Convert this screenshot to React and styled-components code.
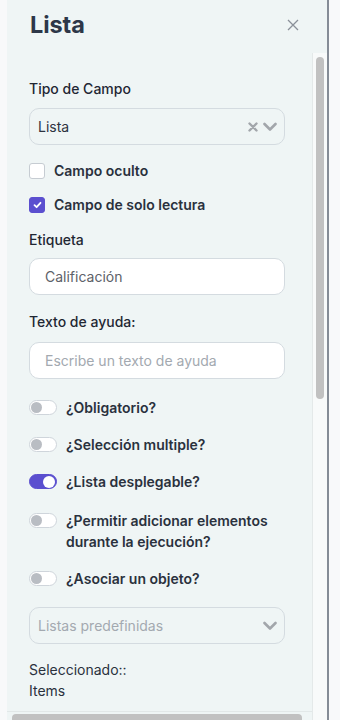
import React from "react";
import styled, { createGlobalStyle } from "styled-components";

const Global = createGlobalStyle`
  html, body { margin: 0; padding: 0; }
  body {
    background: #f8f9fa;
    font-family: Inter, "Noto Sans", sans-serif;
    -webkit-font-smoothing: antialiased;
  }
  * { box-sizing: border-box; }
`;

const Page = styled.div`
  width: 340px;
  height: 720px;
  padding-left: 7px;
  overflow: hidden;
`;

const Panel = styled.div`
  width: 322px;
  height: 720px;
  background: #eff5f5;
  border-right: 2px solid #858c96;
  display: flex;
  flex-direction: column;
  overflow: hidden;
`;

const Header = styled.div`
  height: 53px;
  flex: none;
  display: flex;
  align-items: center;
  justify-content: space-between;
  padding: 0 28px 4px 23px;
`;

const Title = styled.h1`
  margin: 0;
  font-size: 23.5px;
  font-weight: 700;
  color: #2d3748;
  letter-spacing: -0.1px;
`;

const CloseBtn = styled.button`
  border: none;
  background: none;
  padding: 0;
  width: 12px;
  height: 12px;
  display: flex;
  color: #8a9099;
`;

const Body = styled.div`
  flex: none;
  height: 667px;
  display: flex;
`;

const Scroller = styled.div`
  width: 305px;
  display: flex;
  flex-direction: column;
`;

const Content = styled.div`
  flex: none;
  height: 659px;
  padding: 26px 27px 0 22px;
  border-bottom: 1px solid #e2e8e8;
  display: flex;
  flex-direction: column;
`;

const HBar = styled.div`
  flex: none;
  margin: 2px 10px 0 5px;
  height: 10px;
  border-radius: 4px 4px 0 0;
  background: #c1c1c1;
`;

const VTrack = styled.div`
  width: 15px;
  background: #f8fafa;
  border-left: 1px solid #e4e9e9;
  padding: 4px 2px 0 3px;
`;

const VThumb = styled.div`
  width: 8px;
  height: 342px;
  border-radius: 4px;
  background: #c1c1c1;
`;

const Label = styled.div`
  font-size: 14px;
  line-height: 20px;
  font-weight: 500;
  color: #1f2733;
  margin-top: ${(p) => p.$mt || 0}px;
`;

const Box = styled.div`
  margin-top: ${(p) => p.$mt || 0}px;
  height: 37px;
  width: 256px;
  border: 1px solid #d4dbe0;
  border-radius: 10px;
  background: ${(p) => (p.$white ? "#ffffff" : "#eff5f5")};
  display: flex;
  align-items: center;
  padding: 0 ${(p) => (p.$white ? 15 : 8)}px;
  padding-right: 7px;
  font-size: 14px;
  color: ${(p) => (p.$muted ? "#a3a9b0" : p.$white ? "#5d6168" : "#2d3340")};
`;

const BoxText = styled.span`
  flex: 1;
`;

const Icons = styled.span`
  display: flex;
  align-items: center;
  gap: 5px;
  color: #a2a6ab;
`;

const CheckRow = styled.label`
  margin-top: ${(p) => p.$mt || 0}px;
  display: flex;
  align-items: center;
  gap: 9px;
  font-size: 14px;
  line-height: 20px;
  font-weight: 600;
  color: #2a313d;
`;

const CheckBox = styled.span`
  width: 16px;
  height: 16px;
  border-radius: 3px;
  border: 1px solid ${(p) => (p.$on ? "#5b4fcf" : "#c6ccd2")};
  background: ${(p) => (p.$on ? "#5b4fcf" : "#ffffff")};
  display: flex;
  align-items: center;
  justify-content: center;
  flex: none;
`;

const ToggleRow = styled.label`
  margin-top: ${(p) => p.$mt || 0}px;
  display: flex;
  align-items: flex-start;
  gap: 9px;
  font-size: 14px;
  line-height: 21px;
  font-weight: 600;
  color: #2a313d;
`;

const Track = styled.span`
  flex: none;
  margin-top: 3px;
  width: 28px;
  height: 15px;
  border-radius: 8px;
  border: 1px solid ${(p) => (p.$on ? "#5b4fcf" : "#cfd5db")};
  background: ${(p) => (p.$on ? "#5b4fcf" : "#ffffff")};
  display: flex;
  align-items: center;
  justify-content: ${(p) => (p.$on ? "flex-end" : "flex-start")};
  padding: 0 1px;
`;

const Knob = styled.span`
  width: ${(p) => (p.$on ? 12 : 11)}px;
  height: ${(p) => (p.$on ? 12 : 11)}px;
  border-radius: 50%;
  background: ${(p) => (p.$on ? "#ffffff" : "#b9bdc3")};
`;

const Plain = styled.div`
  margin-top: ${(p) => p.$mt || 0}px;
  font-size: 14px;
  line-height: 21px;
  color: #2a313d;
`;

const Chevron = () => (
  <svg width="14" height="10" viewBox="0 0 14 10">
    <path d="M1.5 2 L7 7.5 L12.5 2" fill="none" stroke="currentColor" strokeWidth="2.6" strokeLinecap="round" strokeLinejoin="round" />
  </svg>
);

const Clear = () => (
  <svg width="10" height="10" viewBox="0 0 10 10">
    <path d="M1.5 1.5 L8.5 8.5 M8.5 1.5 L1.5 8.5" stroke="currentColor" strokeWidth="2.4" strokeLinecap="round" />
  </svg>
);

const Toggle = ({ on, children, mt }) => (
  <ToggleRow $mt={mt}>
    <Track $on={on}>
      <Knob $on={on} />
    </Track>
    <span>{children}</span>
  </ToggleRow>
);

export default function App() {
  return (
    <>
      <Global />
      <Page>
        <Panel>
          <Header>
            <Title>Lista</Title>
            <CloseBtn aria-label="Cerrar">
              <svg width="12" height="12" viewBox="0 0 12 12">
                <path d="M1 1 L11 11 M11 1 L1 11" stroke="currentColor" strokeWidth="1.3" />
              </svg>
            </CloseBtn>
          </Header>
          <Body>
            <Scroller>
              <Content>
                <Label>Tipo de Campo</Label>
                <Box $mt={9}>
                  <BoxText>Lista</BoxText>
                  <Icons>
                    <Clear />
                    <Chevron />
                  </Icons>
                </Box>
                <CheckRow $mt={16}>
                  <CheckBox />
                  Campo oculto
                </CheckRow>
                <CheckRow $mt={14}>
                  <CheckBox $on>
                    <svg width="9" height="8" viewBox="0 0 9 8">
                      <path d="M1.5 4.2 L3.6 6.2 L7.5 1.8" fill="none" stroke="#fff" strokeWidth="1.8" strokeLinecap="round" strokeLinejoin="round" />
                    </svg>
                  </CheckBox>
                  Campo de solo lectura
                </CheckRow>
                <Label $mt={15}>Etiqueta</Label>
                <Box $white $mt={8}>
                  <BoxText>Calificación</BoxText>
                </Box>
                <Label $mt={17}>Texto de ayuda:</Label>
                <Box $white $muted $mt={10}>
                  <BoxText>Escribe un texto de ayuda</BoxText>
                </Box>
                <Toggle mt={18}>¿Obligatorio?</Toggle>
                <Toggle mt={16}>¿Selección multiple?</Toggle>
                <Toggle on mt={16}>¿Lista desplegable?</Toggle>
                <Toggle mt={18}>
                  ¿Permitir adicionar elementos
                  <br />
                  durante la ejecución?
                </Toggle>
                <Toggle mt={16}>¿Asociar un objeto?</Toggle>
                <Box $muted $mt={18}>
                  <BoxText>Listas predefinidas</BoxText>
                  <Icons>
                    <Chevron />
                  </Icons>
                </Box>
                <Plain $mt={15}>
                  Seleccionado::
                  <br />
                  Items
                </Plain>
              </Content>
              <HBar />
            </Scroller>
            <VTrack>
              <VThumb />
            </VTrack>
          </Body>
        </Panel>
      </Page>
    </>
  );
}
